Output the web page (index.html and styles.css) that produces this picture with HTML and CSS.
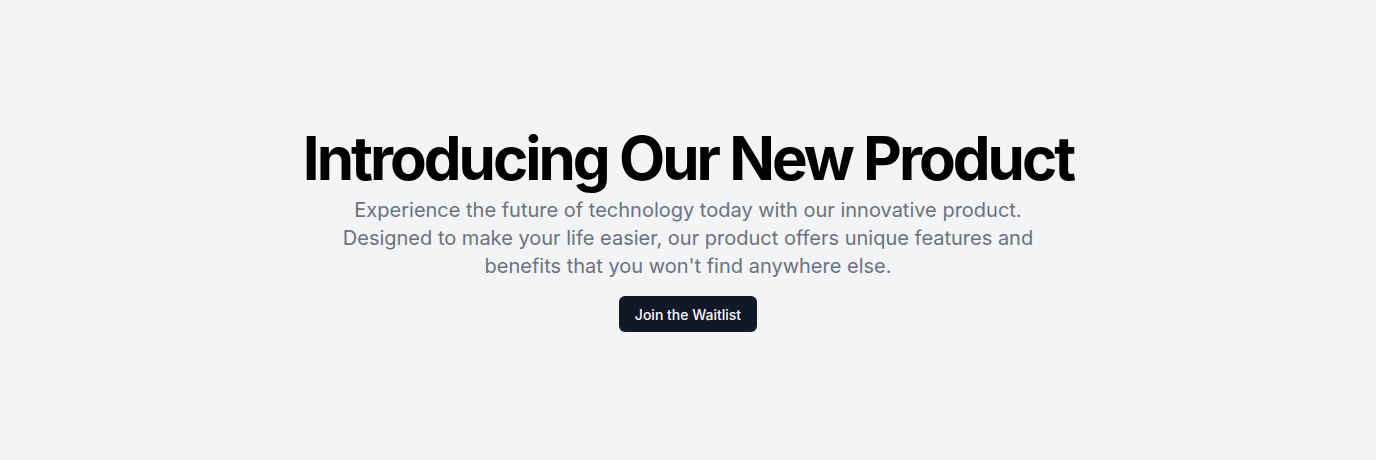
FILE: index.html
```html
<!DOCTYPE html>
<html lang="en">
<head>
<meta charset="utf-8">
<title>Introducing Our New Product</title>
<link rel="stylesheet" href="styles.css">
</head>
<body>
<main class="hero">
  <div class="hero-inner">
    <div class="hero-text">
      <h1 class="hero-title">Introducing Our New Product</h1>
      <p class="hero-lead">Experience the future of technology today with our innovative product. Designed to make your life easier, our product offers unique features and benefits that you won't find anywhere else.</p>
    </div>
    <a class="btn" href="#">Join the Waitlist</a>
  </div>
</main>
</body>
</html>
```

FILE: styles.css
```css
* { box-sizing: border-box; }
html, body { margin: 0; padding: 0; }
body {
  background: #f3f4f6;
  font-family: Inter, "Noto Sans", sans-serif;
}
.hero {
  min-height: 460px;
  display: flex;
  align-items: center;
  justify-content: center;
  padding: 0 16px;
}
.hero-inner {
  display: flex;
  flex-direction: column;
  align-items: center;
  gap: 16px;
  text-align: center;
}
.hero-text {
  display: flex;
  flex-direction: column;
  align-items: center;
  gap: 8px;
}
.hero-title {
  margin: 0;
  font-size: 60px;
  line-height: 60px;
  font-weight: 700;
  letter-spacing: -0.05em;
  color: #000;
}
.hero-lead {
  margin: 0;
  max-width: 700px;
  font-size: 20px;
  line-height: 28px;
  color: #6b7280;
}
.btn {
  display: inline-flex;
  align-items: center;
  justify-content: center;
  height: 36px;
  padding: 0 16px;
  border-radius: 6px;
  background: #111827;
  color: #f9fafb;
  font-size: 14px;
  font-weight: 500;
  text-decoration: none;
}
```
